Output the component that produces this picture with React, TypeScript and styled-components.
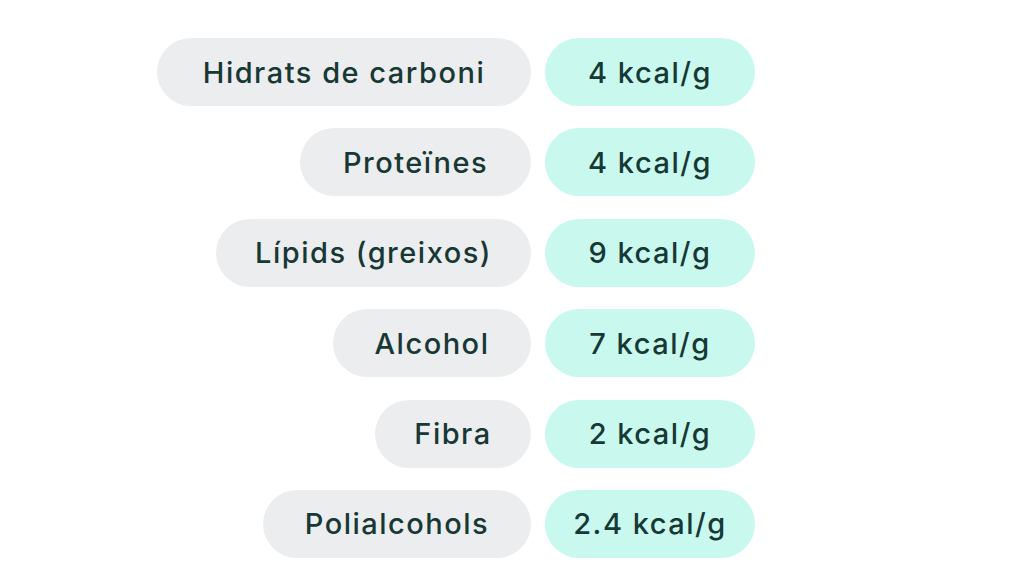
import React from "react";
import styled, { createGlobalStyle } from "styled-components";

const Global = createGlobalStyle`
  html, body { margin: 0; padding: 0; background: #ffffff; }
  body { font-family: "Poppins", "Inter", "Noto Sans", sans-serif; }
`;

const List = styled.div`
  width: 755px;
  padding-top: 38px;
  display: flex;
  flex-direction: column;
  gap: 22.4px;
`;

const Row = styled.div`
  display: flex;
  justify-content: flex-end;
  gap: 14px;
`;

const Pill = styled.div<{ $w: number; $tone: "gray" | "mint" }>`
  width: ${(p) => p.$w}px;
  height: 68px;
  border-radius: 34px;
  background: ${(p) => (p.$tone === "gray" ? "#ecedef" : "#c8f8ee")};
  color: #173834;
  font-family: "Inter", "Noto Sans", sans-serif;
  font-weight: 500;
  font-size: 29px;
  letter-spacing: 1.5px;
  display: flex;
  align-items: center;
  justify-content: center;
  box-sizing: border-box;
`;

const rows = [
  { name: "Hidrats de carboni", w: 374, val: "4 kcal/g" },
  { name: "Proteïnes", w: 231, val: "4 kcal/g" },
  { name: "Lípids (greixos)", w: 315, val: "9 kcal/g" },
  { name: "Alcohol", w: 198, val: "7 kcal/g" },
  { name: "Fibra", w: 156, val: "2 kcal/g" },
  { name: "Polialcohols", w: 268, val: "2.4 kcal/g" },
];

export default function App() {
  return (
    <>
      <Global />
      <List>
        {rows.map((r) => (
          <Row key={r.name}>
            <Pill $w={r.w} $tone="gray">{r.name}</Pill>
            <Pill $w={210} $tone="mint">{r.val}</Pill>
          </Row>
        ))}
      </List>
    </>
  );
}
